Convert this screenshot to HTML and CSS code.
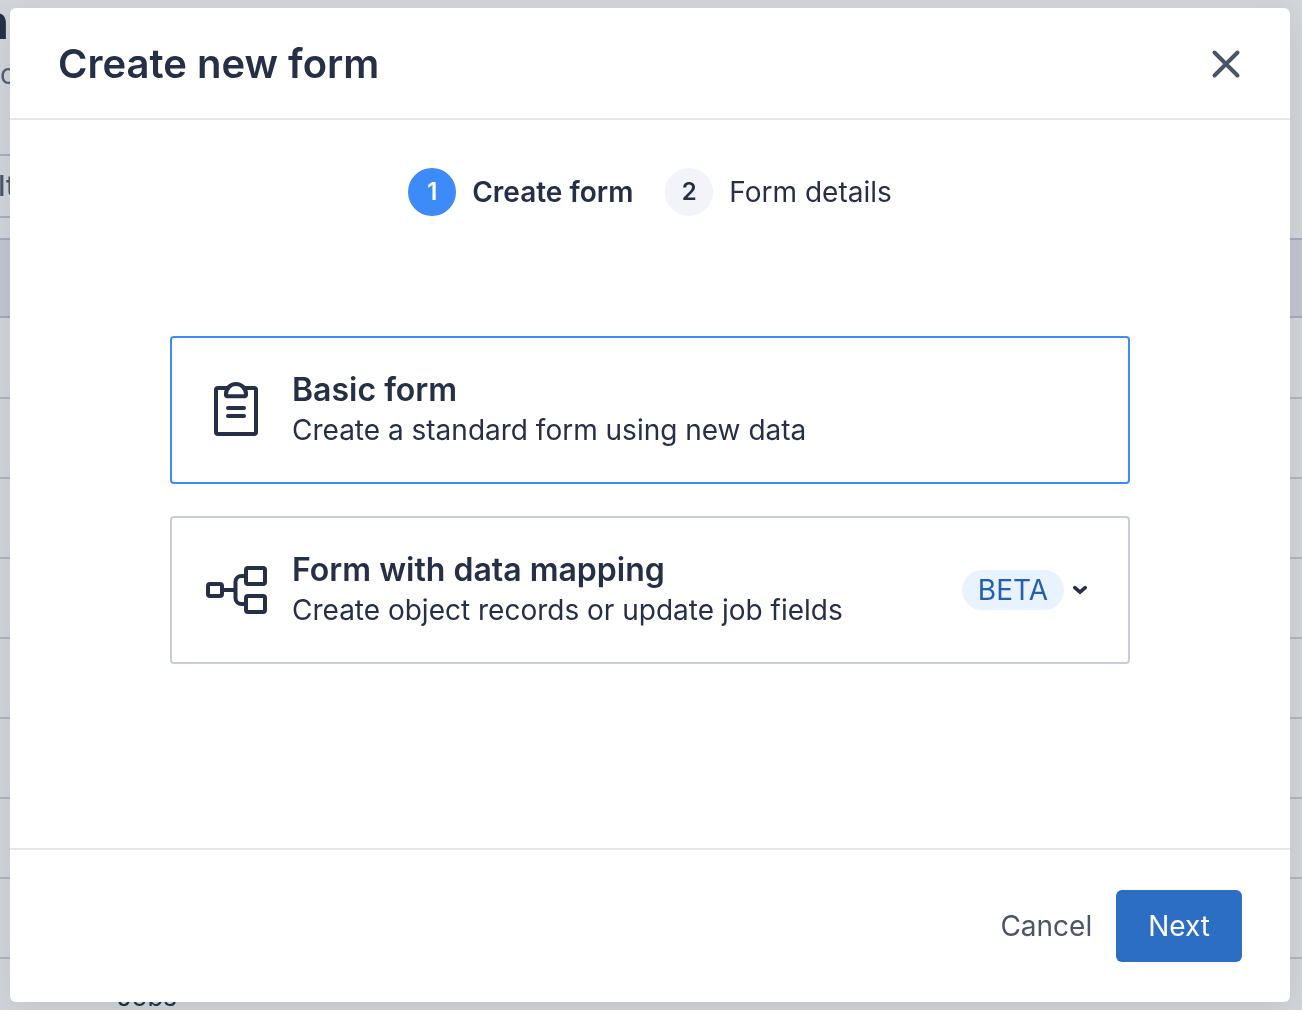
FILE: index.html
```html
<!DOCTYPE html>
<html lang="en">
<head>
<meta charset="utf-8">
<meta name="viewport" content="width=device-width, initial-scale=1">
<title>Create new form</title>
<link rel="stylesheet" href="styles.css">
</head>
<body>
<div class="page" aria-hidden="true">
  <div class="page-title">n</div>
  <div class="page-subtitle">c</div>
  <div class="page-filter">It</div>
  <div class="page-rows">
    <div class="row row-head"></div>
    <div class="row"></div>
    <div class="row"></div>
    <div class="row"></div>
    <div class="row"></div>
    <div class="row"></div>
    <div class="row"></div>
    <div class="row"></div>
    <div class="row"></div>
    <div class="row">Jobs</div>
  </div>
</div>

<div class="overlay">
  <section class="dialog" role="dialog" aria-modal="true" aria-labelledby="dialog-title">
    <header class="dialog-header">
      <h1 class="dialog-title" id="dialog-title">Create new form</h1>
      <button class="close" type="button" aria-label="Close">
        <svg width="32" height="32" viewBox="0 0 32 32" fill="none" stroke="currentColor" stroke-width="4" stroke-linecap="round"><path d="M4.5 4.5L27.5 27.5M27.5 4.5L4.5 27.5"/></svg>
      </button>
    </header>

    <div class="dialog-body">
      <ol class="steps">
        <li class="step step-active"><span class="step-number">1</span><span class="step-label">Create form</span></li>
        <li class="step"><span class="step-number">2</span><span class="step-label">Form details</span></li>
      </ol>

      <div class="options">
        <button class="option option-selected" type="button" aria-pressed="true">
          <svg class="option-icon" viewBox="0 0 64 64" fill="none" stroke="currentColor" stroke-width="4" stroke-linecap="round" stroke-linejoin="round">
            <path d="M24 10H14A2 2 0 0 0 12 12V54A2 2 0 0 0 14 56H50A2 2 0 0 0 52 54V12A2 2 0 0 0 50 10H40"/>
            <path d="M23.500 18.200H40.500A1.600 1.600 0 0 0 42.100 16.600C42.100 10.500 37.600 6 32 6S21.900 10.500 21.900 16.600A1.600 1.600 0 0 0 23.500 18.200Z"/>
            <path d="M24 30H40M24 38H40"/>
          </svg>
          <span class="option-text">
            <span class="option-title">Basic form</span>
            <span class="option-description">Create a standard form using new data</span>
          </span>
        </button>

        <button class="option" type="button" aria-expanded="false">
          <svg class="option-icon" viewBox="0 0 64 64" fill="none" stroke="currentColor" stroke-width="4">
            <rect x="4" y="26" width="14" height="12" rx="2"/>
            <rect x="42" y="10" width="19" height="16" rx="2"/>
            <rect x="42" y="38" width="19" height="16" rx="2"/>
            <path d="M18 32H31M42 18H37.500A6 6 0 0 0 31.500 24V40A6 6 0 0 0 37.500 46H42"/>
          </svg>
          <span class="option-text">
            <span class="option-title">Form with data mapping</span>
            <span class="option-description">Create object records or update job fields</span>
          </span>
          <span class="option-extra">
            <span class="badge">BETA</span>
            <svg width="32" height="32" viewBox="0 0 32 32" fill="none" stroke="currentColor" stroke-width="3.6" stroke-linecap="round"><path d="M10.800 13.700L16 18.200L21.200 13.700"/></svg>
          </span>
        </button>
      </div>
    </div>

    <footer class="dialog-footer">
      <button class="cancel" type="button">Cancel</button>
      <button class="next" type="button">Next</button>
    </footer>
  </section>
</div>
</body>
</html>
```
FILE: styles.css
```css
* {
  box-sizing: border-box;
}

body {
  margin: 0;
  font-family: Inter, "Liberation Sans", sans-serif;
  font-size: 28px;
  line-height: 40px;
  color: #253047;
  background: #d2d6da;
}

button {
  margin: 0;
  padding: 0;
  border: 0;
  background: none;
  font: inherit;
  color: inherit;
  cursor: pointer;
}

svg {
  display: block;
  flex: none;
}

/* Page dimmed behind the dialog */
.page {
  position: fixed;
  inset: 0;
  overflow: hidden;
}

.page-title {
  display: flex;
  justify-content: flex-end;
  width: 9px;
  height: 54px;
  font-size: 48px;
  font-weight: 700;
  line-height: 44px;
}

.page-subtitle {
  height: 42px;
  color: #566076;
}

.page-filter {
  width: 160px;
  height: 64px;
  margin: 58px 0 20px -4px;
  border: 2px solid #a9afbc;
  line-height: 60px;
  font-weight: 500;
  color: #4a556b;
}

.row {
  height: 80px;
  padding-left: 117px;
  border-bottom: 2px solid #b0b5c0;
  font-size: 26px;
  line-height: 76px;
}

.row-head {
  margin-bottom: 1px;
  border-top: 2px solid #a5abb9;
  border-bottom-color: #a5abb9;
  background: #c2c6d1;
}

/* Dialog */
.overlay {
  position: relative;
  display: flex;
  min-height: 100vh;
  padding: 8px 12px 8px 10px;
}

.dialog {
  display: flex;
  flex: 1;
  flex-direction: column;
  border-radius: 6px;
  background: #fff;
  box-shadow: 0 8px 32px rgba(30, 40, 60, 0.1);
}

.dialog-header {
  display: flex;
  align-items: center;
  justify-content: space-between;
  padding: 32px 48px 30px;
  border-bottom: 2px solid #e6e7eb;
}

.dialog-title {
  margin: 0;
  font-size: 40px;
  font-weight: 600;
  line-height: 48px;
}

.close {
  color: #4a5468;
}

.dialog-body {
  flex: 1;
  padding: 48px;
}

.steps {
  display: flex;
  justify-content: center;
  gap: 32px;
  margin: 0 0 120px;
  padding: 0;
  list-style: none;
}

.step {
  display: flex;
  align-items: center;
  gap: 16px;
}

.step-number {
  width: 48px;
  border-radius: 50%;
  background: #f3f4f9;
  font-size: 24px;
  font-weight: 600;
  line-height: 48px;
  text-align: center;
}

.step-active .step-number {
  background: #3d8bf8;
  color: #fff;
}

.step-active .step-label {
  font-weight: 600;
}

.options {
  display: grid;
  gap: 32px;
  max-width: 960px;
  margin: 0 auto;
}

.option {
  display: flex;
  align-items: center;
  gap: 24px;
  padding: 32px;
  border: 2px solid #c9cdd6;
  border-radius: 4px;
  text-align: left;
}

.option-selected {
  border-color: #3d8bf8;
}

.option-icon {
  width: 64px;
  height: 64px;
}

.option-text {
  display: grid;
  flex: 1;
}

.option-title {
  font-size: 32px;
  font-weight: 600;
}

.option-extra {
  display: flex;
  align-items: center;
}

.badge {
  padding: 0 16px;
  border-radius: 20px;
  background: #e8f3ff;
  color: #2560b0;
}

.dialog-footer {
  display: flex;
  align-items: center;
  justify-content: flex-end;
  gap: 24px;
  padding: 40px 48px;
  border-top: 2px solid #e6e7eb;
}

.cancel {
  color: #4a5468;
}

.next {
  padding: 16px 32px;
  border-radius: 6px;
  background: #2d6ec5;
  color: #fff;
}
```
